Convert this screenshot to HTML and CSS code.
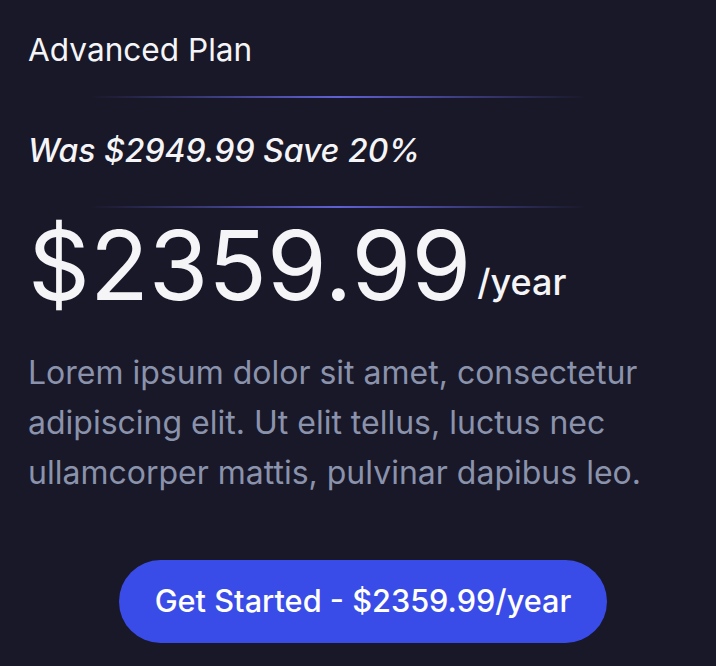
FILE: index.html
```html
<!DOCTYPE html>
<html lang="en">
<head>
<meta charset="utf-8">
<title>Advanced Plan</title>
<link rel="stylesheet" href="styles.css">
</head>
<body>
<div class="card">
  <h3 class="plan-title">Advanced Plan</h3>
  <div class="divider"></div>
  <p class="was">Was $2949.99 Save 20%</p>
  <div class="divider"></div>
  <div class="price-row">
    <span class="price">$2359.99</span>
    <span class="period">/year</span>
  </div>
  <p class="desc">Lorem ipsum dolor sit amet, consectetur adipiscing elit. Ut elit tellus, luctus nec ullamcorper mattis, pulvinar dapibus leo.</p>
  <div class="cta-wrap">
    <a class="cta" href="#">Get Started - $2359.99/year</a>
  </div>
</div>
</body>
</html>
```
FILE: styles.css
```css
html, body {
  margin: 0;
  padding: 0;
  background: #191829;
}
body {
  font-family: Inter, "Noto Sans", sans-serif;
  color: #f5f5f7;
}
.card {
  padding: 32px 68px 0 28px;
  display: flex;
  flex-direction: column;
}
.plan-title {
  margin: 0;
  font-size: 31.6px;
  font-weight: 400;
  line-height: 36px;
}
.divider {
  height: 2px;
  width: 80%;
  align-self: center;
  background: linear-gradient(90deg, rgba(90,90,210,0) 0%, rgba(100,100,222,0.95) 50%, rgba(90,90,210,0) 100%);
}
.plan-title + .divider {
  margin-top: 28px;
}
.was {
  margin: 35px 0 0;
  font-size: 32px;
  font-style: italic;
  font-weight: 500;
  line-height: 36px;
}
.was + .divider {
  margin-top: 37px;
}
.price-row {
  display: flex;
  align-items: flex-end;
  gap: 6px;
  margin-top: 2px;
}
.price {
  font-size: 96.5px;
  line-height: 110px;
  font-weight: 400;
}
.period {
  font-size: 36px;
  line-height: 40px;
  font-weight: 500;
  margin-bottom: 18px;
}
.desc {
  margin: 28px 0 0;
  font-size: 32px;
  line-height: 50px;
  color: #8a93ab;
}
.cta-wrap {
  display: flex;
  justify-content: center;
  padding-left: 50px;
  margin-top: 62px;
}
.cta {
  display: inline-block;
  background: #3a4ce8;
  color: #ffffff;
  text-decoration: none;
  font-size: 30.7px;
  font-weight: 500;
  line-height: 36px;
  padding: 23px 36px 24px;
  border-radius: 42px;
}
```
